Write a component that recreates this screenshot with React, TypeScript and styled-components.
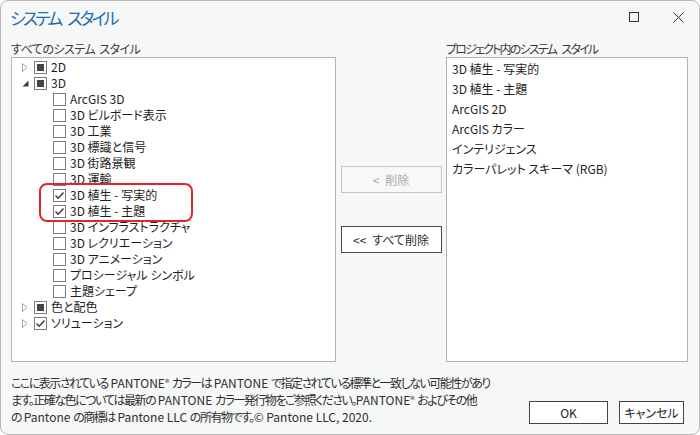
import React from 'react'
import styled, { createGlobalStyle } from 'styled-components'

const GlobalStyle = createGlobalStyle`
    html, body {
        margin: 0;
        padding: 0;
        background: #ffffff;
    }
    body {
        font-family: "Noto Sans CJK JP", "Noto Sans", sans-serif;
        font-feature-settings: "palt";
        font-size: 12px;
        color: #1e1e1e;
    }
`

type CheckState = 'none' | 'mixed' | 'checked'
type Expander = 'none' | 'collapsed' | 'expanded'

interface TreeItem {
    label: string
    level: number
    expander: Expander
    state: CheckState
}

const before: TreeItem[] = [
    { label: '2D', level: 0, expander: 'collapsed', state: 'mixed' },
    { label: '3D', level: 0, expander: 'expanded', state: 'mixed' },
    { label: 'ArcGIS 3D', level: 1, expander: 'none', state: 'none' },
    { label: '3D ビルボード表示', level: 1, expander: 'none', state: 'none' },
    { label: '3D 工業', level: 1, expander: 'none', state: 'none' },
    { label: '3D 標識と信号', level: 1, expander: 'none', state: 'none' },
    { label: '3D 街路景観', level: 1, expander: 'none', state: 'none' },
    { label: '3D 運輸', level: 1, expander: 'none', state: 'none' },
]

const highlighted: TreeItem[] = [
    { label: '3D 植生 - 写実的', level: 1, expander: 'none', state: 'checked' },
    { label: '3D 植生 - 主題', level: 1, expander: 'none', state: 'checked' },
]

const after: TreeItem[] = [
    { label: '3D インフラストラクチャ', level: 1, expander: 'none', state: 'none' },
    { label: '3D レクリエーション', level: 1, expander: 'none', state: 'none' },
    { label: '3D アニメーション', level: 1, expander: 'none', state: 'none' },
    { label: 'プロシージャル シンボル', level: 1, expander: 'none', state: 'none' },
    { label: '主題シェープ', level: 1, expander: 'none', state: 'none' },
    { label: '色と配色', level: 0, expander: 'collapsed', state: 'mixed' },
    { label: 'ソリューション', level: 0, expander: 'collapsed', state: 'checked' },
]

const projectStyles = [
    '3D 植生 - 写実的',
    '3D 植生 - 主題',
    'ArcGIS 2D',
    'ArcGIS カラー',
    'インテリジェンス',
    'カラーパレット スキーマ (RGB)',
]

function ExpanderIcon({ kind }: { kind: Expander }) {
    if (kind === 'collapsed') {
        return (
            <svg width="6" height="9" viewBox="0 0 6 9">
                <polygon points="0.5,0.5 5,4.5 0.5,8.5" fill="none" stroke="#a8a8a8" strokeWidth="1" />
            </svg>
        )
    }
    if (kind === 'expanded') {
        return (
            <svg width="7" height="7" viewBox="0 0 7 7">
                <polygon points="6.5,0.5 6.5,6.5 0.5,6.5" fill="#3c3c3c" />
            </svg>
        )
    }
    return null
}

function Check({ state }: { state: CheckState }) {
    return (
        <CheckBox>
            {state === 'mixed' && <MixedMark />}
            {state === 'checked' && (
                <svg width="11" height="11" viewBox="0 0 11 11">
                    <polyline points="1.5,5.5 4.2,8.2 9.5,2.5" fill="none" stroke="#3a3a3a" strokeWidth="1.4" />
                </svg>
            )}
        </CheckBox>
    )
}

function TreeRow({ item }: { item: TreeItem }) {
    return (
        <Row level={item.level}>
            {item.level === 0 && (
                <ExpanderSlot>
                    <ExpanderIcon kind={item.expander} />
                </ExpanderSlot>
            )}
            <Check state={item.state} />
            <RowLabel>{item.label}</RowLabel>
        </Row>
    )
}

export default function App() {
    return (
        <>
            <GlobalStyle />
            <Window>
                <TitleBar>
                    <Title>システム スタイル</Title>
                    <WindowControls>
                        <ControlButton aria-label="最大化">
                            <svg width="11" height="11" viewBox="0 0 11 11">
                                <rect x="0.5" y="0.5" width="9" height="9" fill="none" stroke="#333" strokeWidth="1" />
                            </svg>
                        </ControlButton>
                        <ControlButton aria-label="閉じる">
                            <svg width="11" height="11" viewBox="0 0 11 11">
                                <path d="M0.5 0.5 L10.5 10.5 M10.5 0.5 L0.5 10.5" stroke="#333" strokeWidth="1" />
                            </svg>
                        </ControlButton>
                    </WindowControls>
                </TitleBar>

                <Columns>
                    <Column>
                        <SectionLabel spacing={-0.5}>すべてのシステム スタイル</SectionLabel>
                        <ListBox>
                            {before.map(item => <TreeRow key={item.label} item={item} />)}
                            <HighlightGroup>
                                {highlighted.map(item => <TreeRow key={item.label} item={item} />)}
                            </HighlightGroup>
                            {after.map(item => <TreeRow key={item.label} item={item} />)}
                        </ListBox>
                    </Column>

                    <MiddleColumn>
                        <ActionButton disabled>&lt; 削除</ActionButton>
                        <ActionButton>&lt;&lt; すべて削除</ActionButton>
                    </MiddleColumn>

                    <Column>
                        <SectionLabel spacing={-1.8}>プロジェクト内のシステム スタイル</SectionLabel>
                        <ListBox>
                            {projectStyles.map(name => <ListItem key={name}>{name}</ListItem>)}
                        </ListBox>
                    </Column>
                </Columns>

                <Footer>
                    <Notice>
                        <Jp>ここに表示されている</Jp> PANTONE<Reg>®</Reg> <Jp>カラーは</Jp> PANTONE <Jp>で指定されている標準と一致しない可能性があり</Jp><br />
                        <Jp>ます。正確な色については最新の</Jp> PANTONE <Jp>カラー発行物をご参照ください。</Jp>PANTONE<Reg>®</Reg> <Jp>およびその他</Jp><br />
                        <Jp>の</Jp> Pantone <Jp>の商標は</Jp> Pantone LLC <Jp>の所有物です。</Jp>© Pantone LLC, 2020.
                    </Notice>
                    <DialogButtons>
                        <DialogButton width={79}>OK</DialogButton>
                        <DialogButton width={65}>キャンセル</DialogButton>
                    </DialogButtons>
                </Footer>
            </Window>
        </>
    )
}

const Window = styled.div`
    width: 700px;
    height: 435px;
    box-sizing: border-box;
    border: 1px solid #b9b9b9;
    border-radius: 8px;
    background: #f6f7f7;
    display: flex;
    flex-direction: column;
    overflow: hidden;
`

const TitleBar = styled.div`
    height: 40px;
    display: flex;
    align-items: flex-start;
    justify-content: space-between;
    padding-left: 9px;
`

const Title = styled.div`
    margin-top: 5px;
    font-size: 17px;
    line-height: 24px;
    letter-spacing: -2.9px;
    word-spacing: 6px;
    color: #2470b3;
`

const WindowControls = styled.div`
    display: flex;
    padding-top: 11px;
    padding-right: 15px;
    gap: 33px;
`

const ControlButton = styled.div`
    width: 11px;
    height: 11px;
    display: flex;
`

const Columns = styled.div`
    display: grid;
    grid-template-columns: 325px 110px 242px;
    padding-left: 10px;
`

const Column = styled.div`
    display: flex;
    flex-direction: column;
`

const SectionLabel = styled.div<{ spacing: number }>`
    height: 16px;
    line-height: 16px;
    color: #3a3a3a;
    letter-spacing: ${p => p.spacing}px;
    word-spacing: ${p => -p.spacing * 2 + 1}px;
    white-space: nowrap;
`

const ListBox = styled.div`
    height: 305px;
    box-sizing: border-box;
    border: 1px solid #b4b4b4;
    background: #ffffff;
    padding-top: 1px;
`

const Row = styled.div<{ level: number }>`
    height: 16px;
    display: flex;
    align-items: center;
    padding-left: ${p => (p.level === 0 ? 10 : 41)}px;
    white-space: nowrap;
`

const ExpanderSlot = styled.div`
    width: 12px;
    height: 16px;
    display: flex;
    align-items: center;
`

const CheckBox = styled.div`
    width: 13px;
    height: 13px;
    box-sizing: border-box;
    border: 1px solid #7c7c7c;
    background: #ffffff;
    display: flex;
    align-items: center;
    justify-content: center;
    flex-shrink: 0;
`

const MixedMark = styled.div`
    width: 7px;
    height: 7px;
    background: #444444;
`

const RowLabel = styled.span`
    margin-left: 4px;
    line-height: 16px;
`

const HighlightGroup = styled.div`
    position: relative;

    &::after {
        content: '';
        position: absolute;
        top: -4px;
        bottom: -3px;
        left: 27px;
        width: 154px;
        box-sizing: border-box;
        border: 2px solid #e2242b;
        border-radius: 8px;
        pointer-events: none;
    }
`

const MiddleColumn = styled.div`
    display: flex;
    flex-direction: column;
    align-items: center;
    padding-top: 125px;
    gap: 33px;
`

const ActionButton = styled.button`
    width: 101px;
    height: 27px;
    box-sizing: border-box;
    margin: 0;
    padding: 0;
    font-family: inherit;
    font-feature-settings: "palt";
    font-size: 12px;
    word-spacing: 3px;
    background: #ffffff;
    color: #2a2a2a;
    border: 1px solid #4a4a4a;

    &:disabled {
        background: #f7f8f8;
        color: #a8a8a8;
        border-color: #c4c4c4;
    }
`

const ListItem = styled.div`
    height: 20px;
    line-height: 20px;
    padding-left: 5px;
    white-space: nowrap;
`

const Footer = styled.div`
    display: flex;
    justify-content: space-between;
    align-items: flex-end;
    padding: 12px 15px 0 10px;
`

const Notice = styled.div`
    flex: 1;
    min-width: 0;
    line-height: 17px;
    color: #2e2e2e;
    white-space: nowrap;
`

const Jp = styled.span`
    letter-spacing: -1.5px;
`

const Reg = styled.span`
    font-size: 9px;
    vertical-align: 2px;
`

const DialogButtons = styled.div`
    display: flex;
    flex-shrink: 0;
    gap: 11px;
    margin-bottom: 1px;
`

const DialogButton = styled.button<{ width: number }>`
    width: ${p => p.width}px;
    height: 23px;
    box-sizing: border-box;
    margin: 0;
    padding: 0;
    font-family: inherit;
    font-feature-settings: "palt";
    font-size: 12px;
    color: #222222;
    background: #ffffff;
    border: 1px solid #444444;
`
